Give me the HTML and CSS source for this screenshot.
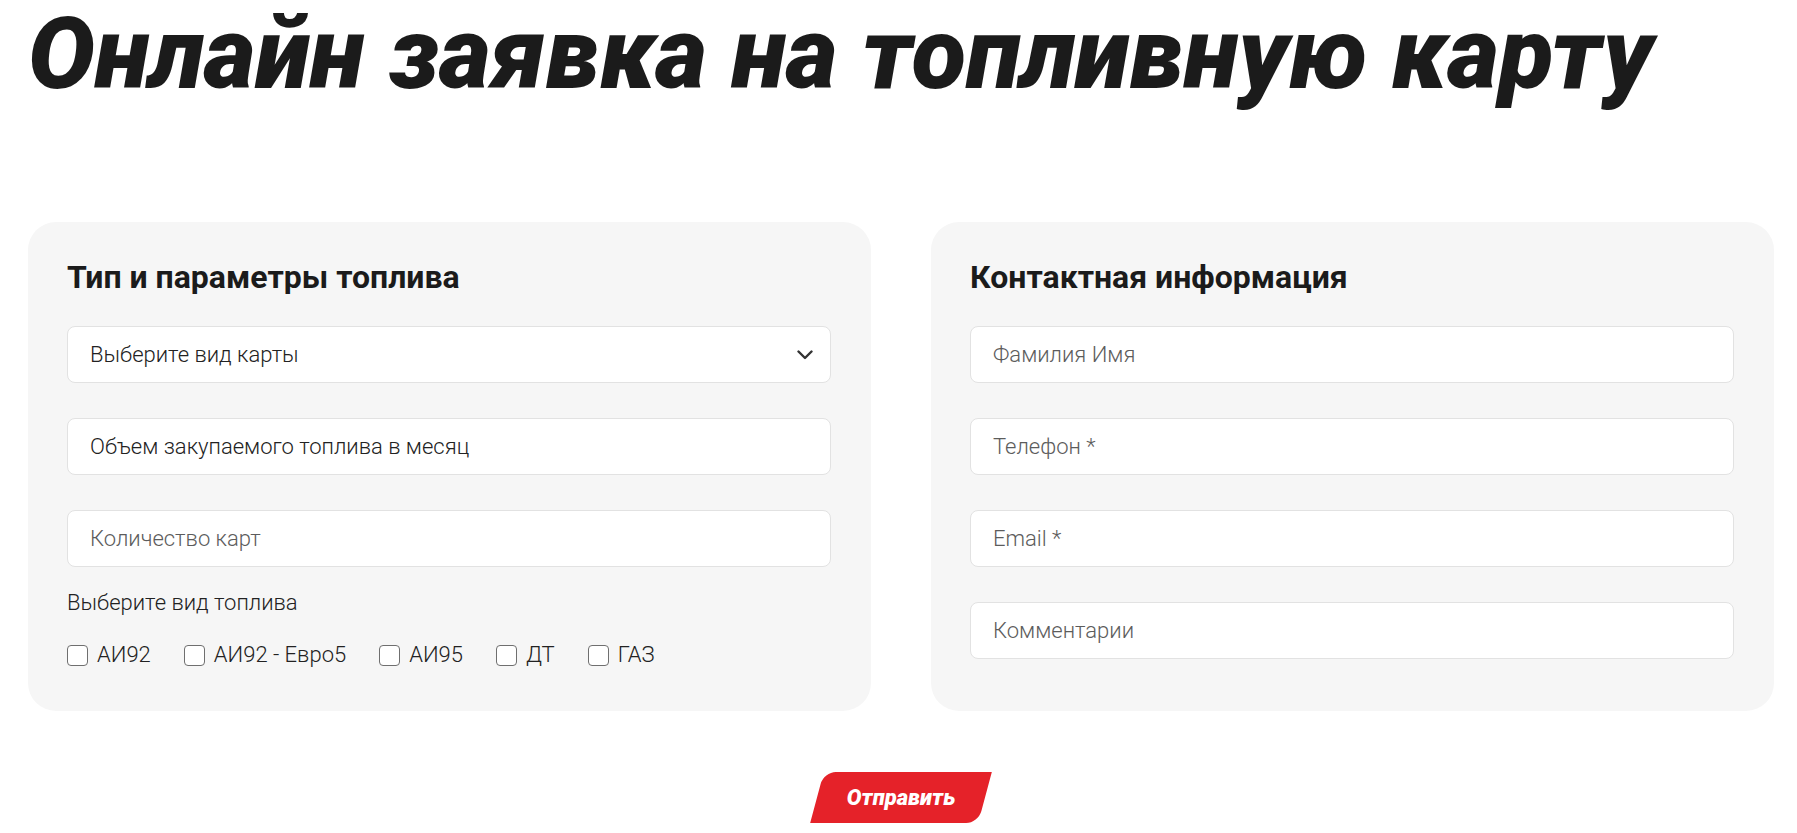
FILE: index.html
```html
<!DOCTYPE html>
<html lang="ru">
<head>
  <meta charset="UTF-8">
  <meta name="viewport" content="width=device-width, initial-scale=1.0">
  <title>Онлайн заявка на топливную карту</title>
  <link rel="stylesheet" href="styles.css">
</head>
<body>

<div class="page">
  <h1>Онлайн заявка на топливную карту</h1>

  <form class="order-form" onsubmit="return false;">
    <div class="cards">

      <!-- топливо -->
      <div class="card">
        <h2 class="card-title">Тип и параметры топлива</h2>
        <div class="fields">
          <div class="select">
            <select class="field field-dark" name="card-type">
              <option>Выберите вид карты</option>
              <option>Топливная карта</option>
              <option>Виртуальная карта</option>
            </select>
            <svg class="select-arrow" width="16" height="10" viewBox="0 0 16 10">
              <path d="M1.5 1.5 L8 8 L14.5 1.5" fill="none" stroke="#333" stroke-width="2.4" stroke-linecap="round" stroke-linejoin="round"/>
            </svg>
          </div>
          <input class="field field-dark" type="text" name="volume" placeholder="Объем закупаемого топлива в месяц">
          <input class="field" type="text" name="count" placeholder="Количество карт">
        </div>

        <p class="fuel-label">Выберите вид топлива</p>
        <div class="checks">
          <label class="check"><input type="checkbox" name="fuel" value="ai92"> АИ92</label>
          <label class="check"><input type="checkbox" name="fuel" value="ai92e5"> АИ92 - Евро5</label>
          <label class="check"><input type="checkbox" name="fuel" value="ai95"> АИ95</label>
          <label class="check"><input type="checkbox" name="fuel" value="dt"> ДТ</label>
          <label class="check"><input type="checkbox" name="fuel" value="gas"> ГАЗ</label>
        </div>
      </div>

      <!-- контакты -->
      <div class="card">
        <h2 class="card-title">Контактная информация</h2>
        <div class="fields">
          <input class="field" type="text" name="name" placeholder="Фамилия Имя">
          <input class="field" type="tel" name="phone" placeholder="Телефон *">
          <input class="field" type="email" name="email" placeholder="Email *">
          <input class="field" type="text" name="comment" placeholder="Комментарии">
        </div>
      </div>

    </div>

    <div class="submit-row">
      <button class="submit" type="submit"><span>Отправить</span></button>
    </div>
  </form>
</div>

</body>
</html>
```

FILE: styles.css
```css
body {
  margin: 0;
  font-family: Roboto, "Noto Sans", Arial, sans-serif;
  color: #1b1b1b;
  background-color: #fff;
}

.page {
  padding: 4px 23px 0 28px;
}

h1 {
  margin: 0 0 118px;
  padding-right: 20px;
  font-size: 100px;
  font-weight: 900;
  font-style: italic;
  line-height: 1;
  color: #1b1b1b;
}

.cards {
  display: grid;
  grid-template-columns: 1fr 1fr;
  gap: 60px;
}

.card {
  background-color: #f6f6f6;
  border-radius: 28px;
  padding: 36px 40px 43px 39px;
}

.card-title {
  margin: 0 0 30px;
  font-size: 32px;
  font-weight: 700;
  line-height: 1.2;
  color: #1b1b1b;
}

.fields {
  display: flex;
  flex-direction: column;
  gap: 35px;
}

.field {
  box-sizing: border-box;
  width: 100%;
  height: 57px;
  padding: 0 22px;
  border: 1px solid #e2e2e2;
  border-radius: 8px;
  background-color: #fff;
  font-family: inherit;
  font-size: 22px;
  font-weight: 300;
  color: #222;
  outline: none;
}

.field::placeholder {
  color: #5c5c5c;
}

.field-dark::placeholder {
  color: #222;
}

.select {
  position: relative;
}

.select select {
  appearance: none;
  -webkit-appearance: none;
  cursor: pointer;
}

.select-arrow {
  position: absolute;
  right: 18px;
  top: 24px;
  pointer-events: none;
}

.fuel-label {
  margin: 23px 0 0;
  font-size: 22px;
  font-weight: 300;
  line-height: 26px;
  color: #222;
}

.checks {
  display: flex;
  gap: 33px;
  margin-top: 26px;
}

.check {
  display: flex;
  align-items: center;
  gap: 9px;
  font-size: 22px;
  font-weight: 300;
  line-height: 26px;
  color: #222;
  cursor: pointer;
}

.check input {
  appearance: none;
  -webkit-appearance: none;
  box-sizing: border-box;
  width: 21px;
  height: 21px;
  margin: 0;
  border: 1.5px solid #6f6f6f;
  border-radius: 4px;
  background-color: #fff;
  cursor: pointer;
}

.check input:checked {
  background-color: #e52229;
  border-color: #e52229;
}

.submit-row {
  display: flex;
  justify-content: center;
  padding: 61px 0 10px;
}

.submit {
  width: 168px;
  height: 51px;
  border: none;
  border-radius: 12px 0 12px 0;
  background-color: #e52229;
  transform: skewX(-15deg);
  cursor: pointer;
  padding: 0;
}

.submit span {
  display: block;
  transform: skewX(15deg);
  font-family: Roboto, Arial, sans-serif;
  font-size: 22px;
  font-weight: 900;
  font-style: italic;
  color: #fff;
}

.submit:hover {
  background-color: #c91c22;
}
```
